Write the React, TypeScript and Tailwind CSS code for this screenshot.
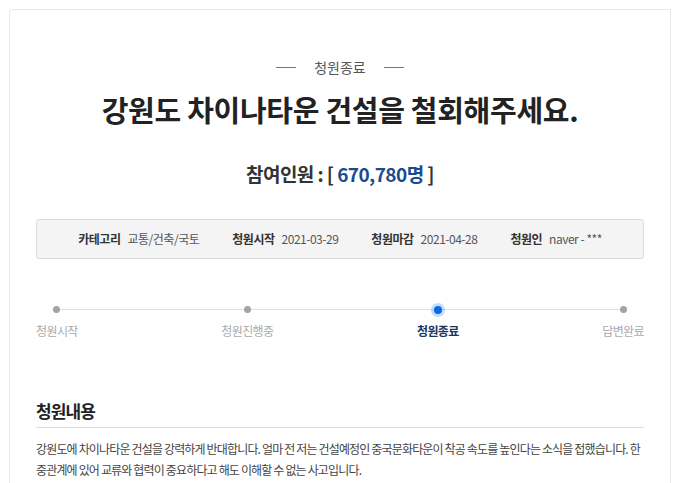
const steps = [
  { label: '청원시작', active: false },
  { label: '청원진행중', active: false },
  { label: '청원종료', active: true },
  { label: '답변완료', active: false },
];

const info = [
  { label: '카테고리', value: '교통/건축/국토' },
  { label: '청원시작', value: '2021-03-29' },
  { label: '청원마감', value: '2021-04-28' },
  { label: '청원인', value: 'naver - ***' },
];

/** Petition detail view: status, title, participant count, meta box, progress and body. */
export default function App() {
  return (
    <div
      className="h-[483px] overflow-hidden bg-white pl-[9px] pt-[9px]"
      style={{ fontFamily: '"Noto Sans CJK KR", "Noto Sans", sans-serif' }}
    >
      <div className="h-[600px] w-[662px] rounded-tl-[4px] border border-[#e8e8e8] px-[26px]">
        <div className="mt-[47px] flex items-center justify-center gap-[18px] text-[14px] leading-[20px] text-[#555]">
          <span className="h-px w-[20px] bg-[#777]" />
          <span>청원종료</span>
          <span className="h-px w-[20px] bg-[#777]" />
        </div>

        <h1 className="mt-[13px] text-center text-[29px] font-bold leading-[38px] tracking-[-0.01em] text-[#222]">
          강원도 차이나타운 건설을 철회해주세요.
        </h1>

        <p className="mt-[32px] text-center text-[19px] font-bold leading-[28px] tracking-[-0.03em] text-[#333]">
          참여인원 : [ <span className="text-[#1b4b8f]">670,780명</span> ]
        </p>

        <div className="mt-[31px] flex h-[40px] items-center justify-center gap-[33px] rounded-[3px] border border-[#dcdcdc] bg-[#f4f4f4] text-[12px] tracking-[-0.04em]">
          {info.map((item) => (
            <div key={item.label} className="flex items-center gap-[7px]">
              <span className="font-bold text-[#333]">{item.label}</span>
              <span className="text-[#555]">{item.value}</span>
            </div>
          ))}
        </div>

        <div className="relative mt-[45px]">
          <div className="absolute left-[16px] right-[18px] top-[5px] h-px bg-[#dedede]" />
          <div className="relative flex justify-between">
            {steps.map((s) => (
              <div key={s.label} className="flex flex-col items-center">
                <div className="flex h-[11px] w-[11px] items-center justify-center">
                  {s.active ? (
                    <span className="h-[8px] w-[8px] rounded-full bg-[#0a6be0] shadow-[0_0_0_3px_rgba(60,140,240,0.3)]" />
                  ) : (
                    <span className="h-[7px] w-[7px] rounded-full bg-[#a3a3a3]" />
                  )}
                </div>
                <span
                  className={
                    s.active
                      ? 'mt-[7px] text-[12px] font-bold leading-[18px] tracking-[-0.05em] text-[#1c3560]'
                      : 'mt-[7px] text-[12px] leading-[18px] tracking-[-0.05em] text-[#aaa]'
                  }
                >
                  {s.label}
                </span>
              </div>
            ))}
          </div>
        </div>

        <h2 className="mt-[58px] border-b border-[#dcdcdc] pb-[3px] text-[17px] font-bold leading-[26px] tracking-[-0.05em] text-[#222]">
          청원내용
        </h2>

        <p className="mt-[10px] whitespace-nowrap text-[12px] leading-[21px] tracking-[-0.07em] text-[#444]">
          강원도에 차이나타운 건설을 강력하게 반대합니다. 얼마 전 저는 건설예정인 중국문화타운이 착공 속도를 높인다는 소식을 접했습니다. 한
          <br />
          중관계에 있어 교류와 협력이 중요하다고 해도 이해할 수 없는 사고입니다.
        </p>
      </div>
    </div>
  );
}
